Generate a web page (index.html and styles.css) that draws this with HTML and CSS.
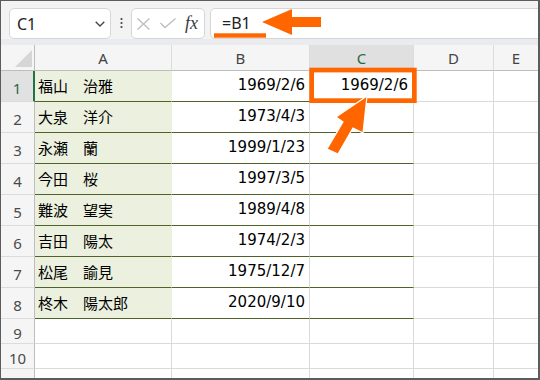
FILE: index.html
```html
<!DOCTYPE html>
<html lang="ja">
<head>
<meta charset="utf-8">
<title>Excel 参照</title>
<link rel="stylesheet" href="styles.css">
</head>
<body>
<div class="frame">
  <div class="toolbar">
    <div class="namebox">
      <span class="ref">C1</span>
      <svg class="chev" width="10" height="6" viewBox="0 0 10 6"><path d="M0.7 0.7 L5 5 L9.3 0.7" fill="none" stroke="#444" stroke-width="1.3"/></svg>
    </div>
    <div class="dots">
      <svg width="3" height="12" viewBox="0 0 3 12"><circle cx="1.5" cy="2" r="1.1" fill="#444"/><circle cx="1.5" cy="6" r="1.1" fill="#444"/><circle cx="1.5" cy="10" r="1.1" fill="#444"/></svg>
    </div>
    <div class="fnbox">
      <svg class="ic-x" width="13" height="12" viewBox="0 0 13 12"><path d="M0.5 0.5 L12.5 11.5 M12.5 0.5 L0.5 11.5" fill="none" stroke="#bdbdbd" stroke-width="1.3"/></svg>
      <svg class="ic-ok" width="16" height="11" viewBox="0 0 16 11"><path d="M0.5 5 L5 9.5 L15.5 0.5" fill="none" stroke="#bdbdbd" stroke-width="1.3"/></svg>
      <span class="fx">fx</span>
    </div>
    <div class="formula"><span class="ftext">=B1</span></div>
  </div>

  <div class="sheet">
    <div class="corner"><span class="tri"></span></div>
    <div class="ch">A</div>
    <div class="ch">B</div>
    <div class="ch ch-sel">C</div>
    <div class="ch">D</div>
    <div class="ch ch-e">E</div>

    <div class="rh rh-sel">1</div>
    <div class="c name">福山　治雅</div>
    <div class="c date">1969/2/6</div>
    <div class="c date datec">1969/2/6</div>
    <div class="c"></div>
    <div class="c ce"></div>

    <div class="rh">2</div>
    <div class="c name">大泉　洋介</div>
    <div class="c date">1973/4/3</div>
    <div class="c datec"></div>
    <div class="c"></div>
    <div class="c ce"></div>

    <div class="rh">3</div>
    <div class="c name">永瀬　蘭</div>
    <div class="c date">1999/1/23</div>
    <div class="c datec"></div>
    <div class="c"></div>
    <div class="c ce"></div>

    <div class="rh">4</div>
    <div class="c name">今田　桜</div>
    <div class="c date">1997/3/5</div>
    <div class="c datec"></div>
    <div class="c"></div>
    <div class="c ce"></div>

    <div class="rh">5</div>
    <div class="c name">難波　望実</div>
    <div class="c date">1989/4/8</div>
    <div class="c datec"></div>
    <div class="c"></div>
    <div class="c ce"></div>

    <div class="rh">6</div>
    <div class="c name">吉田　陽太</div>
    <div class="c date">1974/2/3</div>
    <div class="c datec"></div>
    <div class="c"></div>
    <div class="c ce"></div>

    <div class="rh">7</div>
    <div class="c name">松尾　諭見</div>
    <div class="c date">1975/12/7</div>
    <div class="c datec"></div>
    <div class="c"></div>
    <div class="c ce"></div>

    <div class="rh">8</div>
    <div class="c name">柊木　陽太郎</div>
    <div class="c date">2020/9/10</div>
    <div class="c datec"></div>
    <div class="c"></div>
    <div class="c ce"></div>

    <div class="rh">9</div>
    <div class="c"></div>
    <div class="c"></div>
    <div class="c"></div>
    <div class="c"></div>
    <div class="c ce"></div>

    <div class="rh">10</div>
    <div class="c"></div>
    <div class="c"></div>
    <div class="c"></div>
    <div class="c"></div>
    <div class="c ce"></div>

    <div class="rh">11</div>
    <div class="c"></div>
    <div class="c"></div>
    <div class="c"></div>
    <div class="c"></div>
    <div class="c ce"></div>
  </div>

  <svg class="marks" width="540" height="380" viewBox="0 0 540 380">
    <rect x="214" y="33.3" width="52" height="4.4" fill="#ff6600"/>
    <polygon points="262,22 292,9 292,17 321,17 321,27 292,27 292,35" fill="#ff6600"/>
    <rect x="311.65" y="70.05" width="102.7" height="30.6" fill="none" stroke="#ff6600" stroke-width="4.7"/>
    <polygon points="367,96 363,133 353,128 338,154 327,149 343,122 336,117" fill="#ff6600" stroke="#ffffff" stroke-width="1.2" stroke-linejoin="miter"/>
  </svg>
</div>
</body>
</html>
```

FILE: styles.css
```css
* { box-sizing: border-box; }

html, body {
  margin: 0;
  padding: 0;
  background: #ffffff;
}

.frame {
  position: relative;
  width: 540px;
  height: 380px;
  border-style: solid;
  border-color: #5c5c5c;
  border-width: 1px 2px 2px 1px;
  overflow: hidden;
  background: #ffffff;
  font-family: "Noto Sans", "Noto Sans CJK JP", sans-serif;
}

/* ---------- formula toolbar ---------- */
.toolbar {
  height: 44px;
  display: flex;
  align-items: flex-start;
  padding: 7px 0 0 8px;
  background: #f3f3f3;
  border-bottom: 6px solid #e9ebee;
}

.namebox {
  width: 102px;
  height: 31px;
  background: #ffffff;
  border: 1px solid #d6d6d6;
  border-radius: 5px;
  display: flex;
  align-items: center;
  justify-content: space-between;
  padding: 0 5px 0 7px;
}

.ref {
  font-size: 16px;
  color: #222222;
  line-height: 1;
}

.chev { display: block; margin-top: 1px; }

.dots {
  width: 3px;
  height: 31px;
  margin-left: 9px;
  display: flex;
  align-items: center;
}
.dots svg { display: block; margin-top: -1px; }

.fnbox {
  width: 74px;
  height: 31px;
  margin-left: 8px;
  background: #ffffff;
  border: 1px solid #d6d6d6;
  border-radius: 5px;
  display: flex;
  align-items: center;
  padding-left: 5px;
}
.ic-x { display: block; margin-top: 1px; }
.ic-ok { display: block; margin-left: 10px; margin-top: 0; }
.fx {
  margin-left: 9px;
  font-family: "Liberation Serif", "DejaVu Serif", serif;
  font-style: italic;
  font-size: 18px;
  color: #3a3a3a;
  line-height: 1;
  margin-top: -2px;
}

.formula {
  flex: 1;
  height: 31px;
  margin-left: 5px;
  margin-right: -12px;
  background: #ffffff;
  border: 1px solid #d6d6d6;
  border-radius: 5px;
  display: flex;
  align-items: center;
  padding-left: 11px;
}
.ftext {
  font-size: 16px;
  color: #222222;
  line-height: 1;
  margin-top: -1px;
}

/* ---------- sheet grid ---------- */
.sheet {
  display: grid;
  grid-template-columns: 34px 137px 138px 104px 80px 1fr;
  grid-template-rows: 26px repeat(8, 31px) repeat(3, 25px);
}

.corner {
  position: relative;
  background: #f5f5f5;
  border-right: 1px solid #bdbdbd;
  border-bottom: 1px solid #bdbdbd;
}
.tri {
  position: absolute;
  right: 2px;
  bottom: 3px;
  width: 0;
  height: 0;
  border-left: 17px solid transparent;
  border-bottom: 17px solid #d6d6d6;
}

.ch {
  background: #f5f5f5;
  border-right: 1px solid #dcdcdc;
  border-bottom: 1px solid #bdbdbd;
  display: flex;
  align-items: center;
  justify-content: center;
  font-size: 15px;
  color: #444444;
  padding-top: 1px;
}
.ch-sel {
  background: #e0e0e0;
  color: #1e6b47;
}
.ch-e { border-right: none; }

.rh {
  background: #f5f5f5;
  border-right: 1px solid #bdbdbd;
  border-bottom: 1px solid #dcdcdc;
  display: flex;
  align-items: center;
  justify-content: center;
  font-size: 15px;
  color: #4a4a4a;
  padding-top: 3px;
}
.rh-sel {
  background: #e1e1e1;
  color: #1e6b47;
  border-right: 2px solid #217346;
}

.c {
  border-right: 1px solid #dadada;
  border-bottom: 1px solid #dadada;
  display: flex;
  align-items: center;
  font-family: "DejaVu Sans", "Noto Sans CJK JP", sans-serif;
  font-size: 15px;
  color: #000000;
  white-space: nowrap;
  padding-bottom: 2px;
}
.ce { border-right: none; }

.name {
  background: #ebf1de;
  border-right-color: #ebf1de;
  border-bottom-color: #4f6228;
  padding-left: 3px;
  font-family: "Noto Sans CJK JP", sans-serif;
}

.date {
  justify-content: flex-end;
  padding-right: 4px;
  border-bottom-color: #4f6228;
}

.datec {
  justify-content: flex-end;
  padding-right: 5px;
  border-bottom-color: #4f6228;
}

/* ---------- annotations ---------- */
.marks {
  position: absolute;
  left: -1px;
  top: -1px;
  pointer-events: none;
}
```
